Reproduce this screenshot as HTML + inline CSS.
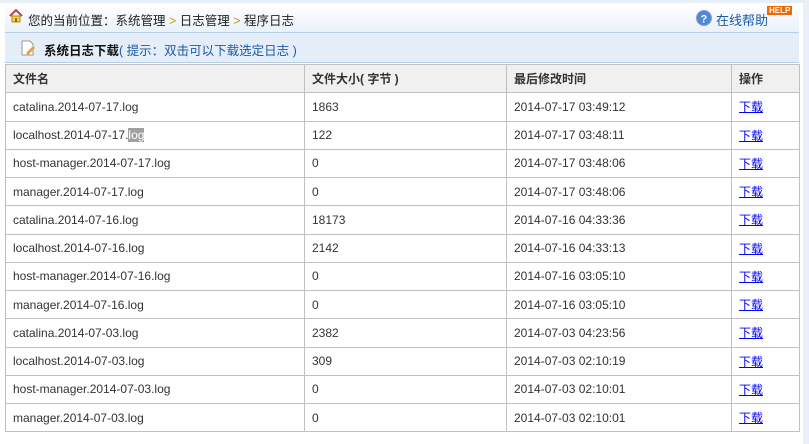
<!DOCTYPE html>
<html><head><meta charset="utf-8"><style>
body{margin:0;width:809px;height:444px;background:#fff;font-family:"Liberation Sans","Noto Sans CJK SC",sans-serif;font-size:12px;color:#333;position:relative;overflow:hidden}
.frame{position:absolute;left:0;top:0;width:809px;height:3px;background:#e6eef8}
.rside{position:absolute;left:803px;top:0;width:6px;height:444px;background:#e9eff8}
.top{position:absolute;left:5px;top:3px;width:794px;height:29px;background:linear-gradient(#fff,#eaf1fa);border-bottom:1px solid #b7cfe6}
.crumb{position:absolute;left:23px;top:7px;font-size:12.5px;color:#222}
.help{position:absolute;color:#1a5aa8;font-size:13px}
.hb{position:absolute;background:#f06a00;color:#fff;font-size:8px;font-weight:bold;padding:0 2px;line-height:9px}
.title{position:absolute;left:5px;top:33px;width:794px;height:29px;background:#e4edf8;border-bottom:1px solid #b7cfe6}
.title span{position:absolute;left:39px;top:7px;font-weight:bold;color:#111;font-size:12.5px}
.title em{font-style:normal;font-weight:normal;color:#1a5aa8}
table{position:absolute;left:5px;top:64px;border-collapse:collapse;width:795px}
tr{height:28.25px}
td,th{border:1px solid #c0c0c0;padding:0 0 0 7px;text-align:left;font-size:12px}
th{background:#f0f0f0;font-weight:bold;color:#333}
a{color:#00f}
.sel{background:#a0a0a0;color:#fff}
</style></head><body>
<div class="frame"></div><div class="rside"></div>
<div class="top">
<svg style="position:absolute;left:4px;top:6px" width="14" height="14"><path d="M1 7L7 1L13 7" stroke="#b44" stroke-width="2" fill="none"/><rect x="3" y="7" width="8" height="6" fill="#f0d060" stroke="#a80"/><rect x="6" y="9" width="2" height="4" fill="#a60"/></svg>
<div class="crumb">您的当前位置：系统管理 <span style="color:#c90">&gt;</span> 日志管理 <span style="color:#c90">&gt;</span> 程序日志</div>
<svg style="position:absolute;left:691px;top:7px" width="16" height="16"><circle cx="8" cy="8" r="7.5" fill="#4a8ad8" stroke="#99b"/><text x="4.5" y="12.5" font-size="11" font-weight="bold" fill="#fff" font-family="Liberation Sans">?</text></svg>
<div class="help" style="left:711px;top:7px">在线帮助</div>
<div class="hb" style="left:762px;top:3px">HELP</div>
</div>
<div class="title">
<svg style="position:absolute;left:15px;top:7px" width="16" height="16"><path d="M2 1H10L13 4V15H2Z" fill="#fff" stroke="#999"/><path d="M6 13L13 6L15 8L8 15Z" fill="#e8a040"/></svg>
<span>系统日志下载<em>( 提示：双击可以下载选定日志 )</em></span></div>
<table>
<tr><th style="width:291px">文件名</th><th style="width:194px">文件大小( 字节 )</th><th style="width:217px">最后修改时间</th><th>操作</th></tr>
<tr><td>catalina.2014-07-17.log</td><td>1863</td><td>2014-07-17 03:49:12</td><td><a href="#">下载</a></td></tr>
<tr><td>localhost.2014-07-17.<span class="sel">log</span></td><td>122</td><td>2014-07-17 03:48:11</td><td><a href="#">下载</a></td></tr>
<tr><td>host-manager.2014-07-17.log</td><td>0</td><td>2014-07-17 03:48:06</td><td><a href="#">下载</a></td></tr>
<tr><td>manager.2014-07-17.log</td><td>0</td><td>2014-07-17 03:48:06</td><td><a href="#">下载</a></td></tr>
<tr><td>catalina.2014-07-16.log</td><td>18173</td><td>2014-07-16 04:33:36</td><td><a href="#">下载</a></td></tr>
<tr><td>localhost.2014-07-16.log</td><td>2142</td><td>2014-07-16 04:33:13</td><td><a href="#">下载</a></td></tr>
<tr><td>host-manager.2014-07-16.log</td><td>0</td><td>2014-07-16 03:05:10</td><td><a href="#">下载</a></td></tr>
<tr><td>manager.2014-07-16.log</td><td>0</td><td>2014-07-16 03:05:10</td><td><a href="#">下载</a></td></tr>
<tr><td>catalina.2014-07-03.log</td><td>2382</td><td>2014-07-03 04:23:56</td><td><a href="#">下载</a></td></tr>
<tr><td>localhost.2014-07-03.log</td><td>309</td><td>2014-07-03 02:10:19</td><td><a href="#">下载</a></td></tr>
<tr><td>host-manager.2014-07-03.log</td><td>0</td><td>2014-07-03 02:10:01</td><td><a href="#">下载</a></td></tr>
<tr><td>manager.2014-07-03.log</td><td>0</td><td>2014-07-03 02:10:01</td><td><a href="#">下载</a></td></tr>
</table>
</body></html>
